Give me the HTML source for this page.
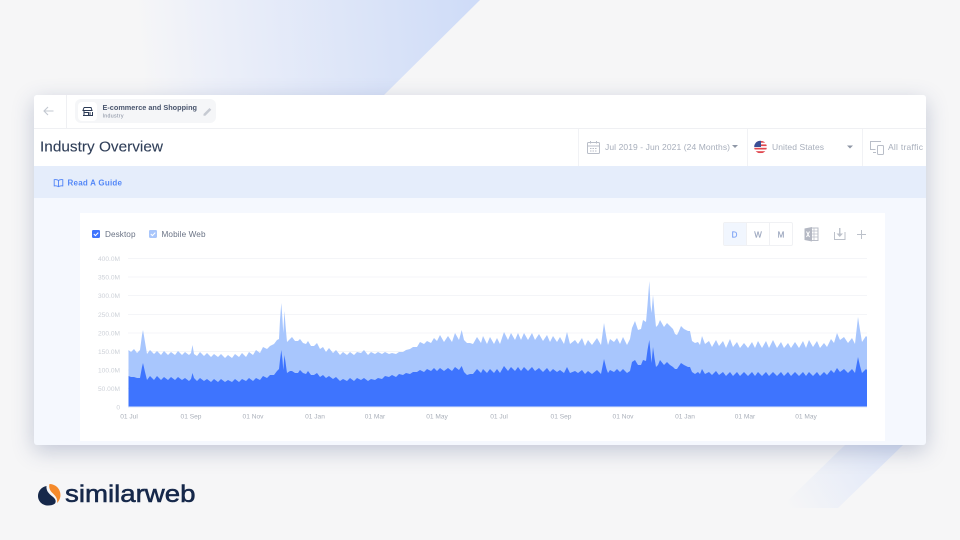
<!DOCTYPE html>
<html lang="en">
<head>
<meta charset="utf-8">
<title>Industry Overview</title>
<style>
html,body{margin:0;padding:0;width:960px;height:540px;overflow:hidden;background:#f6f6f7}
#bg{position:absolute;left:0;top:0}
#card{position:absolute;left:34px;top:95px;width:892px;height:350px;background:#f5f8fe;border-radius:3px;box-shadow:0 6px 22px rgba(45,65,120,.26)}
#page{position:absolute;left:0;top:0;filter:blur(.35px)}
text{font-family:"Liberation Sans",sans-serif}
</style>
</head>
<body>
<svg id="bg" width="960" height="540" viewBox="0 0 960 540">
<defs>
<linearGradient id="g1" gradientUnits="userSpaceOnUse" x1="475" y1="40" x2="140" y2="70">
<stop offset="0" stop-color="#cfdcf8"/><stop offset=".8" stop-color="#edf0f9"/><stop offset="1" stop-color="#f6f6f7"/>
</linearGradient>
<linearGradient id="g2" gradientUnits="userSpaceOnUse" x1="885" y1="445" x2="785" y2="505">
<stop offset="0" stop-color="#e1e8f8"/><stop offset="1" stop-color="#f6f6f7"/>
</linearGradient>
</defs>
<polygon points="130,0 480,0 383,96 130,96" fill="url(#g1)"/>
<polygon points="845,445 903,445 838,508 780,508" fill="url(#g2)"/>
</svg>
<div id="card"></div>
<svg id="page" width="960" height="540" viewBox="0 0 960 540">
<!-- card panels -->
<path d="M34 198V98a3 3 0 0 1 3-3H923a3 3 0 0 1 3 3V198Z" fill="#fff"/>
<rect x="34" y="166" width="892" height="32" fill="#e5edfb"/>
<rect x="34" y="128" width="892" height="1" fill="#eff0f3"/>
<rect x="66" y="95" width="1" height="33" fill="#eff0f3"/>
<rect x="578" y="129" width="1" height="37" fill="#f1f2f5"/>
<rect x="747" y="129" width="1" height="37" fill="#f1f2f5"/>
<rect x="862" y="129" width="1" height="37" fill="#f1f2f5"/>
<rect x="80" y="213" width="805" height="228" fill="#fff"/>

<!-- back arrow -->
<path d="M53.500 111H44.500M48 107l-4 4 4 4" fill="none" stroke="#c3c8d1" stroke-width="1.100"/>

<!-- chip -->
<rect x="75" y="99" width="141" height="24" rx="6" fill="#f5f6f8"/>
<rect x="78" y="102" width="19" height="19" rx="4" fill="#fff"/>
<path d="M84 107.500h7l1 3M84 107.500l-1 3h9.500M84 110.500v5h4.500v-3H84M83 115.500h9M90 112v3.500h2.500V112" fill="none" stroke="#2b3a55" stroke-width="1"/>
<text x="102.500" y="110" font-size="7.300" font-weight="700" fill="#4a566e" textLength="94.500">E-commerce and Shopping</text>
<text x="102.500" y="117.500" font-size="5.300" fill="#7d8698" textLength="21">Industry</text>
<path d="M203.500 114l6-6 1.800 1.800-6 6h-1.800Z" fill="#c6cad2"/>

<!-- title -->
<text x="40" y="151.500" font-size="15" fill="#2f3e58" stroke="#2f3e58" stroke-width=".1" textLength="123" lengthAdjust="spacingAndGlyphs">Industry Overview</text>

<!-- date -->
<g fill="none" stroke="#b9bec8" stroke-width="1">
<rect x="587.500" y="142.500" width="12" height="11" rx="1"/>
<path d="M587.500 146h12M590.500 141v2.500M596.500 141v2.500"/>
<path d="M590 148.500h7M590 151h7" stroke-dasharray="1.500 1"/>
</g>
<text x="605" y="150" font-size="8.500" fill="#a7aebb" textLength="125">Jul 2019 - Jun 2021 (24 Months)</text>
<polygon points="732,145 738,145 735,148" fill="#8f97a6"/>

<!-- flag -->
<clipPath id="fc"><circle cx="760.500" cy="147" r="6.300"/></clipPath>
<g clip-path="url(#fc)">
<rect x="754" y="140" width="14" height="14" fill="#fff"/>
<rect x="754" y="141" width="14" height="1.700" fill="#e0484f"/>
<rect x="754" y="144.400" width="14" height="1.700" fill="#e0484f"/>
<rect x="754" y="147.800" width="14" height="1.700" fill="#e0484f"/>
<rect x="754" y="151.200" width="14" height="1.900" fill="#e0484f"/>
<rect x="754" y="140" width="7" height="7" fill="#3a4f96"/>
</g>
<text x="772" y="150" font-size="8.500" fill="#a7aebb" textLength="52">United States</text>
<polygon points="847,145.500 853,145.500 850,148.500" fill="#8f97a6"/>

<!-- devices -->
<path d="M881 141.500h-10.500v8h5M873 152.500h3" fill="none" stroke="#b9bec8" stroke-width="1"/>
<rect x="877.500" y="145.500" width="6" height="9" rx="1" fill="none" stroke="#b9bec8" stroke-width="1"/>
<text x="888" y="150" font-size="8.500" fill="#a7aebb" textLength="35">All traffic</text>

<!-- guide -->
<path d="M58.500 180.500c-1-.8-2.800-1-4.300-.8v6.200c1.500-.2 3.300 0 4.300.8 1-.8 2.800-1 4.300-.8v-6.200c-1.500-.2-3.300 0-4.300.8ZM58.500 180.500v6.200" fill="none" stroke="#4f82f7" stroke-width=".9"/>
<text x="67.500" y="185.500" font-size="8" font-weight="700" fill="#5387f7" textLength="54.500">Read A Guide</text>

<!-- legend -->
<rect x="92" y="230" width="8" height="8" rx="1.200" fill="#3e74fe"/>
<path d="M93.800 234l1.600 1.600 2.900-3" fill="none" stroke="#fff" stroke-width="1"/>
<text x="105" y="237" font-size="8.200" fill="#6a7385" textLength="30.500">Desktop</text>
<rect x="149" y="230" width="8" height="8" rx="1.200" fill="#a9c6fb"/>
<path d="M150.800 234l1.600 1.600 2.900-3" fill="none" stroke="#fff" stroke-width="1"/>
<text x="161.500" y="237" font-size="8.200" fill="#6a7385" textLength="44">Mobile Web</text>

<!-- D W M -->
<rect x="723.500" y="222.500" width="69" height="23" rx="1.500" fill="#fff" stroke="#f0f1f4"/>
<rect x="724" y="223" width="23" height="22" fill="#f1f6fe"/>
<path d="M746.500 222.500v23M769.500 222.500v23" stroke="#f0f1f4"/>
<g font-size="8" text-anchor="middle" stroke-width=".2">
<text x="734.500" y="237.500" fill="#7ea3f5" stroke="#7ea3f5">D</text>
<text x="758" y="237.500" fill="#9aa5bd" stroke="#9aa5bd">W</text>
<text x="781" y="237.500" fill="#9aa5bd" stroke="#9aa5bd">M</text>
</g>

<!-- excel -->
<rect x="810" y="228" width="8" height="12.500" fill="none" stroke="#b9bdc7" stroke-width="1"/>
<path d="M810 231h8M810 234h8M810 237h8M814 228v12" stroke="#b9bdc7" stroke-width=".7"/>
<polygon points="804.500,228.500 812,227 812,241.500 804.500,240" fill="#b4b8c3"/>
<path d="M806.500 231.500l3 5.500M809.500 231.500l-3 5.500" stroke="#fff" stroke-width="1"/>

<!-- download -->
<path d="M834.500 232v7.500h10.500V232" fill="none" stroke="#bcc1ca" stroke-width="1"/>
<path d="M839.750 228v8" stroke="#bcc1ca" stroke-width="1.400"/>
<polygon points="836.500,233.500 843,233.500 839.750,237" fill="#bcc1ca"/>

<!-- plus -->
<path d="M857 234.500h9M861.500 230v9" stroke="#bcc1ca" stroke-width="1"/>

<!-- grid -->
<g stroke="#f4f5f8" stroke-width="1">
<path d="M128 258.500H867M128 277H867M128 295.500H867M128 314.500H867M128 333H867M128 351.500H867M128 370H867M128 388.500H867"/>
</g>

<!-- y labels -->
<g font-size="6.600" fill="#cdd1d8" text-anchor="end">
<text x="120" y="261">400.0M</text>
<text x="120" y="279.500">350.0M</text>
<text x="120" y="298">300.0M</text>
<text x="120" y="317">250.0M</text>
<text x="120" y="335.500">200.0M</text>
<text x="120" y="354">150.0M</text>
<text x="120" y="372.500">100.0M</text>
<text x="120" y="391">50.00M</text>
<text x="120" y="409.500">0</text>
</g>

<!-- light series -->
<polygon fill="#a8c6fd" points="128.500,407 128.500,350 131,352 134,349 137,353 140,350 142,335 143,330 145,342 147,354 150,350 154,354 157,351 161,355 164,351 168,355 171,352 175,355 178,351 182,355 185,352 189,355 191,353 192.500,345 194,354 197,356 200,352 204,356 207,353 211,357 214,354 218,357 221,354 225,358 228,355 232,358 235,354 239,357 242,353 246,357 249,352 253,355 256,350 260,353 263,347 267,349 270,346 274,344 277,340 279,339 280,320 281.300,303 282.500,320 283.300,333 284.400,311 285.500,325 287,342 290,339 292,337 295,341 298,341 300,339 303,343 306,344 308,341 311,346 314,346 317,343 320,349 323,347 326,352 329,348 333,353 336,350 340,355 343,352 347,355 350,352 354,355 357,352 361,353 364,350 368,355 371,352 375,354 378,352 382,354 385,352 389,354 392,353 396,354 399,352 403,352 406,350 410,349 413,347 417,347 420,342 424,344 427,341 431,343 434,338 437,341 440,335 444,342 448,336 452,342 455,333 459,340 461.700,330 464,340 467,343 470,343 473,344 477,337 481,343 483,336 487,344 490,337 494,344 497,338 500,344 504,332 508,340 511,333 515,340 518,333 521,340 524,333 528,340 532,333 535,340 539,334 543,341 547,335 550,342 553,336 557,342 560,337 564,344 567,332 570,344 575,340 578,344 582,338 585,346 588,340 592,345 597,338 601,345 604,323 606.500,338 608,345 610,339 614,342 617,338 620,344 623,337 627,345 630,339 632,328 635,321 638,330 641,329 643,320 646,322 647.500,305 649.300,281 650.500,305 651.500,313 653,295 654.500,312 656,327 658,325 660,320 664,327 667,323 670,326 673,329 675,334 677,335 679,331 681,326 684,329 688,331 690,331 692,341 695,343 698,342 700,345 702,336 705,344 709,341 712,347 716,340 719,346 723,341 726,348 730,339 733,347 737,342 740,348 744,343 748,348 752,342 755,348 758,341 762,348 766,341 769,348 773,340 777,348 781,342 784,348 788,343 791,348 795,342 799,348 803,341 806,348 809,340 813,347 817,341 820,348 824,343 827,347 831,339 834,343 837,333 840,340 844,337 848,343 852,338 855,344 858,317 860,330 862,342 866,336 867,337 867,407"/>

<!-- dark series -->
<polygon fill="#3e74fe" points="128.500,407 128.500,376 131,377 134,377 137,378 140,378 142,367 143,363 145,372 147,380 150,376 154,380 157,376 161,380 164,377 168,380 171,377 175,380 178,377 182,380 185,378 189,381 191,379 192.500,373 194,378 197,381 200,378 204,381 207,379 211,382 214,379 218,382 221,379 225,382 228,380 232,382 235,379 239,382 242,379 246,381 249,378 253,381 256,378 260,380 263,376 267,378 270,375 274,375 277,371 279,369 280,360 281.300,350 282.500,360 283.300,370 284.400,355 285.500,362 287,373 290,371 292,371 295,373 298,373 300,370 303,373 306,374 308,371 311,375 314,375 317,373 320,377 323,375 326,378 329,376 333,379 336,377 340,381 343,379 347,381 350,378 354,381 357,378 361,380 364,378 368,381 371,379 375,380 378,378 382,379 385,376 389,377 392,375 396,377 399,374 403,375 406,373 410,374 413,372 417,372 420,370 424,372 427,369 431,371 434,368 437,371 440,368 444,371 448,368 452,371 455,367 459,370 461.700,366 464,372 467,375 470,374 473,374 477,369 481,373 483,369 487,373 490,369 494,373 497,369 500,373 504,366 508,371 511,367 515,371 518,367 521,371 524,367 528,371 532,367 535,371 539,368 543,372 547,368 550,372 553,369 557,372 560,370 564,373 567,367 570,373 575,371 578,373 582,370 585,374 588,371 592,374 597,370 601,374 604,359 606.500,369 608,373 610,370 614,372 617,369 620,372 623,369 627,373 630,371 632,362 635,360 638,365 641,365 643,360 646,361 647.500,350 649.300,340 650.500,352 651.500,363 653,347 654.500,358 656,367 658,365 660,360 664,365 667,362 670,365 673,367 675,369 677,369 679,366 681,363 684,365 688,367 690,367 692,372 695,374 698,372 700,374 702,369 705,374 709,372 712,375 716,371 719,375 723,372 726,376 730,372 733,376 737,372 740,376 744,372 748,376 752,372 755,376 758,372 762,376 766,372 769,376 773,372 777,376 781,372 784,376 788,372 791,376 795,372 799,376 803,372 806,376 809,372 813,376 817,372 820,376 824,372 827,375 831,370 834,373 837,368 840,372 844,369 848,373 852,369 855,373 858,357 860,366 862,373 866,369 867,370 867,407"/>
<rect x="128" y="406.500" width="739" height="1" fill="#dfe7f8"/>

<!-- x labels -->
<g font-size="6.600" fill="#a9afb9" text-anchor="middle">
<text x="129" y="418.500">01 Jul</text>
<text x="191" y="418.500">01 Sep</text>
<text x="253" y="418.500">01 Nov</text>
<text x="315" y="418.500">01 Jan</text>
<text x="375" y="418.500">01 Mar</text>
<text x="437" y="418.500">01 May</text>
<text x="499" y="418.500">01 Jul</text>
<text x="561" y="418.500">01 Sep</text>
<text x="623" y="418.500">01 Nov</text>
<text x="685" y="418.500">01 Jan</text>
<text x="745" y="418.500">01 Mar</text>
<text x="806" y="418.500">01 May</text>
</g>

<!-- logo -->
<path d="M46.500 486C41.500 487 38 491 38 496C38 501.500 42.500 505.500 48 505.500C50.500 505.500 53 505 55 503.500C56.500 501 55.500 499 52.500 496.500C48.500 493.500 46 490.500 46.500 486Z" fill="#16284a"/>
<path d="M49.500 484A11 11 0 0 1 57 503C58 499 55.500 496 53 493.500C50 491 48.500 487.500 49.500 484Z" fill="#f58a2b"/>
<text x="65" y="502" font-size="24" fill="#16284a" stroke="#16284a" stroke-width=".55" textLength="130.500" lengthAdjust="spacingAndGlyphs">similarweb</text>
</svg>
</body>
</html>
